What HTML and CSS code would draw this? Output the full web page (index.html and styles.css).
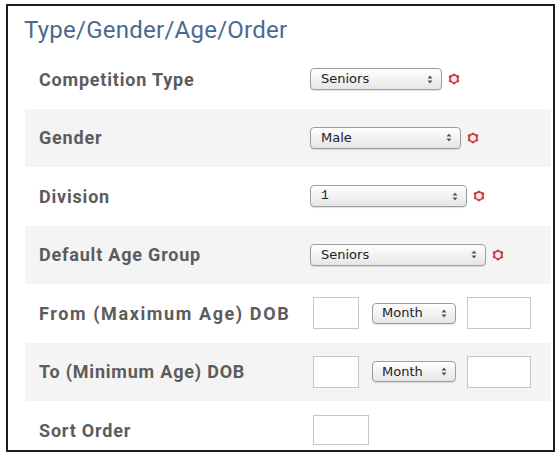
FILE: index.html
```html
<!DOCTYPE html>
<html>
<head>
<meta charset="utf-8">
<link rel="stylesheet" href="styles.css">
</head>
<body>
<div class="frame">
  <h2 class="title">Type/Gender/Age/Order</h2>
  <div class="rows">
    <div class="row">
      <div class="label">Competition Type</div>
      <div class="ctrl">
        <span class="sel w131"><span class="val">Seniors</span><svg class="arr" width="6" height="9" viewBox="0 0 6 9"><path d="M3 0.5L5.5 3.5H0.5Z M3 8.5L5.5 5.5H0.5Z" fill="#555"/></svg></span>
        <svg class="req" width="12" height="12" viewBox="0 0 12 12"><path d="M6 0.5 C7.3 0.5 7.6 1.8 8.5 2 C9.5 2.2 10.7 1.9 11.2 3.1 C11.7 4.3 10.6 5 10.6 5.9 C10.6 6.9 11.7 7.6 11 8.7 C10.3 9.8 9.1 9.2 8.2 9.8 C7.4 10.4 7.3 11.6 6 11.6 C4.7 11.6 4.6 10.4 3.8 9.8 C2.9 9.2 1.7 9.8 1 8.7 C0.3 7.6 1.4 6.9 1.4 5.9 C1.4 5 0.3 4.3 0.8 3.1 C1.3 1.9 2.5 2.2 3.5 2 C4.4 1.8 4.7 0.5 6 0.5 Z" fill="#cf3f4a"/><circle cx="6" cy="6" r="2.9" fill="#fdf3f4"/></svg>
      </div>
    </div>
    <div class="row alt">
      <div class="label">Gender</div>
      <div class="ctrl">
        <span class="sel w150"><span class="val">Male</span><svg class="arr" width="6" height="9" viewBox="0 0 6 9"><path d="M3 0.5L5.5 3.5H0.5Z M3 8.5L5.5 5.5H0.5Z" fill="#555"/></svg></span>
        <svg class="req" width="12" height="12" viewBox="0 0 12 12"><path d="M6 0.5 C7.3 0.5 7.6 1.8 8.5 2 C9.5 2.2 10.7 1.9 11.2 3.1 C11.7 4.3 10.6 5 10.6 5.9 C10.6 6.9 11.7 7.6 11 8.7 C10.3 9.8 9.1 9.2 8.2 9.8 C7.4 10.4 7.3 11.6 6 11.6 C4.7 11.6 4.6 10.4 3.8 9.8 C2.9 9.2 1.7 9.8 1 8.7 C0.3 7.6 1.4 6.9 1.4 5.9 C1.4 5 0.3 4.3 0.8 3.1 C1.3 1.9 2.5 2.2 3.5 2 C4.4 1.8 4.7 0.5 6 0.5 Z" fill="#cf3f4a"/><circle cx="6" cy="6" r="2.9" fill="#fdf3f4"/></svg>
      </div>
    </div>
    <div class="row">
      <div class="label">Division</div>
      <div class="ctrl">
        <span class="sel w156"><span class="val mono">1</span><svg class="arr" width="6" height="9" viewBox="0 0 6 9"><path d="M3 0.5L5.5 3.5H0.5Z M3 8.5L5.5 5.5H0.5Z" fill="#555"/></svg></span>
        <svg class="req" width="12" height="12" viewBox="0 0 12 12"><path d="M6 0.5 C7.3 0.5 7.6 1.8 8.5 2 C9.5 2.2 10.7 1.9 11.2 3.1 C11.7 4.3 10.6 5 10.6 5.9 C10.6 6.9 11.7 7.6 11 8.7 C10.3 9.8 9.1 9.2 8.2 9.8 C7.4 10.4 7.3 11.6 6 11.6 C4.7 11.6 4.6 10.4 3.8 9.8 C2.9 9.2 1.7 9.8 1 8.7 C0.3 7.6 1.4 6.9 1.4 5.9 C1.4 5 0.3 4.3 0.8 3.1 C1.3 1.9 2.5 2.2 3.5 2 C4.4 1.8 4.7 0.5 6 0.5 Z" fill="#cf3f4a"/><circle cx="6" cy="6" r="2.9" fill="#fdf3f4"/></svg>
      </div>
    </div>
    <div class="row alt">
      <div class="label">Default Age Group</div>
      <div class="ctrl">
        <span class="sel w175"><span class="val">Seniors</span><svg class="arr" width="6" height="9" viewBox="0 0 6 9"><path d="M3 0.5L5.5 3.5H0.5Z M3 8.5L5.5 5.5H0.5Z" fill="#555"/></svg></span>
        <svg class="req" width="12" height="12" viewBox="0 0 12 12"><path d="M6 0.5 C7.3 0.5 7.6 1.8 8.5 2 C9.5 2.2 10.7 1.9 11.2 3.1 C11.7 4.3 10.6 5 10.6 5.9 C10.6 6.9 11.7 7.6 11 8.7 C10.3 9.8 9.1 9.2 8.2 9.8 C7.4 10.4 7.3 11.6 6 11.6 C4.7 11.6 4.6 10.4 3.8 9.8 C2.9 9.2 1.7 9.8 1 8.7 C0.3 7.6 1.4 6.9 1.4 5.9 C1.4 5 0.3 4.3 0.8 3.1 C1.3 1.9 2.5 2.2 3.5 2 C4.4 1.8 4.7 0.5 6 0.5 Z" fill="#cf3f4a"/><circle cx="6" cy="6" r="2.9" fill="#fdf3f4"/></svg>
      </div>
    </div>
    <div class="row">
      <div class="label wide">From (Maximum Age) DOB</div>
      <div class="ctrl dob">
        <input class="txt w46" type="text">
        <span class="sel month"><span class="val">Month</span><svg class="arr" width="6" height="9" viewBox="0 0 6 9"><path d="M3 0.5L5.5 3.5H0.5Z M3 8.5L5.5 5.5H0.5Z" fill="#555"/></svg></span>
        <input class="txt w64" type="text">
      </div>
    </div>
    <div class="row alt">
      <div class="label">To (Minimum Age) DOB</div>
      <div class="ctrl dob">
        <input class="txt w46" type="text">
        <span class="sel month"><span class="val">Month</span><svg class="arr" width="6" height="9" viewBox="0 0 6 9"><path d="M3 0.5L5.5 3.5H0.5Z M3 8.5L5.5 5.5H0.5Z" fill="#555"/></svg></span>
        <input class="txt w64" type="text">
      </div>
    </div>
    <div class="row">
      <div class="label">Sort Order</div>
      <div class="ctrl dob">
        <input class="txt w56" type="text">
      </div>
    </div>
  </div>
</div>
</body>
</html>
```
FILE: styles.css
```css
* { box-sizing: border-box; }
html, body { margin: 0; padding: 0; background: #fff; }
body { font-family: "Roboto", "Liberation Sans", sans-serif; }

.frame {
  margin: 4px 0 0 6px;
  width: 549px;
  height: 448px;
  border: 2px solid #1c1c1c;
  overflow: hidden;
  background: #fff;
}

.title {
  margin: 0;
  height: 44px;
  padding: 10px 0 0 16px;
  font-family: "Roboto", "Liberation Sans", sans-serif;
  font-weight: 400;
  font-size: 24px;
  line-height: 28px;
  color: #4c6a8e;
  letter-spacing: 0.25px;
}

.rows { margin-left: 17px; margin-right: 2px; }

.row {
  display: flex;
  align-items: center;
  height: 58.5px;
}
.row.alt { background: #f4f4f4; }

.label {
  width: 285px;
  flex: none;
  padding-left: 14px;
  font-family: "Roboto", "Liberation Sans", sans-serif;
  font-weight: 700;
  font-size: 18px;
  color: #5c5c5c;
  letter-spacing: 0.8px;
  white-space: nowrap;
}
.label.wide { letter-spacing: 1.6px; }

.ctrl {
  display: flex;
  align-items: center;
  gap: 6px;
}
.ctrl.dob { padding-left: 3px; gap: 13px; }

.sel {
  display: inline-flex;
  align-items: center;
  justify-content: space-between;
  height: 22px;
  padding: 0 8px 0 10px;
  border: 1px solid #9d9d9d;
  border-radius: 4px;
  background: linear-gradient(#ffffff, #f2f2f2 50%, #e6e6e6);
  box-shadow: 0 1px 1px rgba(0,0,0,0.12);
  font-family: "DejaVu Sans", "Liberation Sans", sans-serif;
  font-size: 13px;
  color: #222;
}
.sel .val { line-height: 20px; }
.sel .val.mono { font-family: "Liberation Mono", "DejaVu Sans Mono", monospace; }
.arr { flex: none; }

.w131 { width: 132px; }
.w150 { width: 151px; }
.w156 { width: 157px; }
.w175 { width: 176px; }
.month { width: 84px; height: 21px; padding-left: 9px; }

.req { flex: none; }

.txt {
  height: 32px;
  border: 1px solid #c6c6c6;
  background: #fff;
  padding: 0;
  margin: 0;
}
.w46 { width: 46px; }
.w56 { width: 56px; height: 30px; }
.w64 { width: 64px; }
.month + .w64 { margin-left: -2px; }
```
